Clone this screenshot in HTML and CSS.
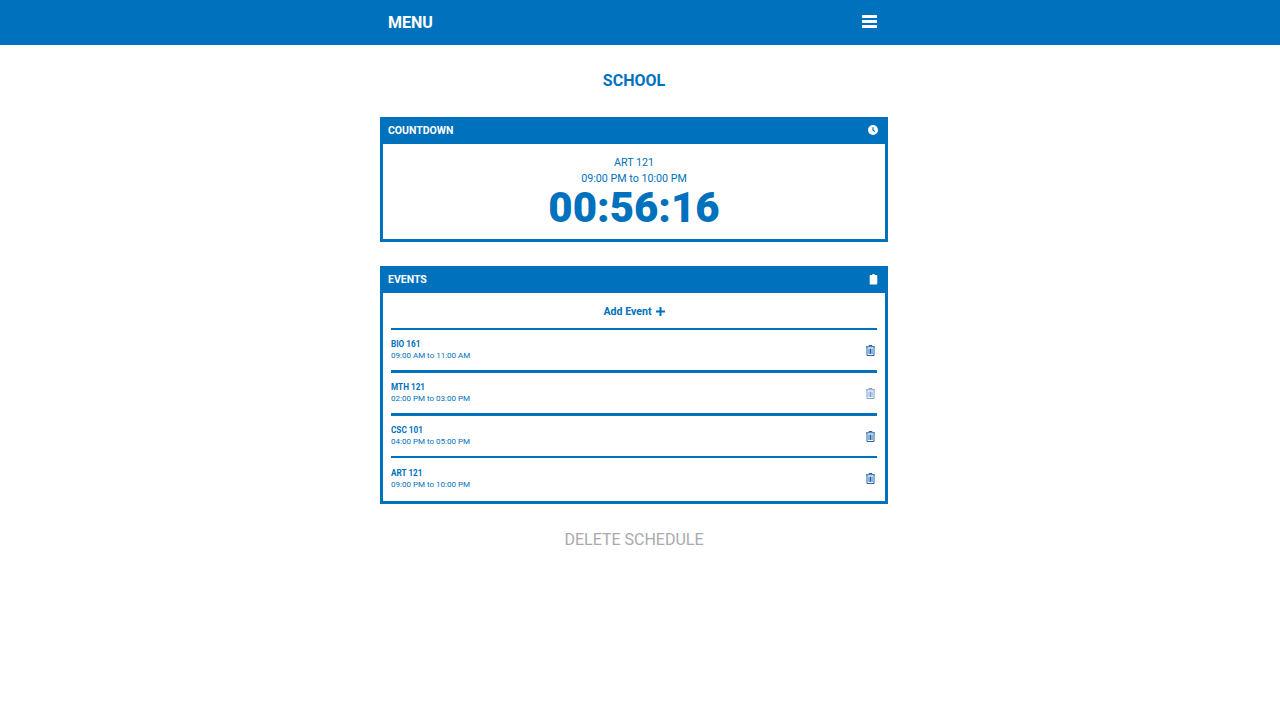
FILE: index.html
```html
<!DOCTYPE html>
<html lang="en">
<head>
  <meta charset="UTF-8">
  <title>School</title>
  <link rel="stylesheet" href="styles.css">
</head>
<body>
  <nav class="topbar">
    <div class="topbar-inner">
      <span class="topbar-title">MENU</span>
      <svg class="icon-bars" viewBox="0 0 15 13"><rect y="0" width="15" height="3" rx="0.5"/><rect y="5" width="15" height="3" rx="0.5"/><rect y="10" width="15" height="3" rx="0.5"/></svg>
    </div>
  </nav>

  <main class="page">
    <h1 class="page-title">SCHOOL</h1>

    <section class="card card-countdown">
      <header class="card-head">
        <span>COUNTDOWN</span>
        <svg class="icon-clock" viewBox="0 0 11 11"><circle cx="5.5" cy="5.5" r="5.5" fill="#fff"/><path d="M5.5 2.4v3.3l2.1 1.6" fill="none" stroke="#0071bc" stroke-width="1.3"/></svg>
      </header>
      <div class="countdown">
        <div class="countdown-name">ART 121</div>
        <div class="countdown-time">09:00 PM to 10:00 PM</div>
        <div class="countdown-clock">00:56:16</div>
      </div>
    </section>

    <section class="card card-events">
      <header class="card-head">
        <span>EVENTS</span>
        <svg class="icon-clipboard" viewBox="0 0 11 11"><path d="M2.500 1h1.500a1.500 1 0 0 1 3 0h1.500a.8.8 0 0 1 .8.8v8a.8.8 0 0 1-.8.8h-6a.8.8 0 0 1-.8-.8v-8a.8.8 0 0 1 .8-.8z" fill="#fff"/></svg>
      </header>
      <div class="events">
        <div class="add-event">Add Event
          <svg class="icon-plus" viewBox="0 0 9 9"><path d="M3.500 0h2v3.500H9v2H5.500V9h-2V5.500H0v-2h3.500z"/></svg>
        </div>
        <div class="event event-first">
          <div><div class="event-name">BIO 161</div><div class="event-time">09:00 AM to 11:00 AM</div></div>
          <svg class="icon-trash" viewBox="0 0 9 11"><path d="M3 1.500V.5h3v1M0 1.800h9M1 2v8.500h7V2M3 3.500v5.500M4.500 3.500v5.500M6 3.500v5.500" fill="none" stroke="#1f63a8" stroke-width="1"/></svg>
        </div>
        <div class="event">
          <div><div class="event-name">MTH 121</div><div class="event-time">02:00 PM to 03:00 PM</div></div>
          <svg class="icon-trash is-faded" viewBox="0 0 9 11"><path d="M3 1.500V.5h3v1M0 1.800h9M1 2v8.500h7V2M3 3.500v5.500M4.500 3.500v5.500M6 3.500v5.500" fill="none" stroke="#1f63a8" stroke-width="1"/></svg>
        </div>
        <div class="event">
          <div><div class="event-name">CSC 101</div><div class="event-time">04:00 PM to 05:00 PM</div></div>
          <svg class="icon-trash" viewBox="0 0 9 11"><path d="M3 1.500V.5h3v1M0 1.800h9M1 2v8.500h7V2M3 3.500v5.500M4.500 3.500v5.500M6 3.500v5.500" fill="none" stroke="#1f63a8" stroke-width="1"/></svg>
        </div>
        <div class="event event-thin">
          <div><div class="event-name">ART 121</div><div class="event-time">09:00 PM to 10:00 PM</div></div>
          <svg class="icon-trash" viewBox="0 0 9 11"><path d="M3 1.500V.5h3v1M0 1.800h9M1 2v8.500h7V2M3 3.500v5.500M4.500 3.500v5.500M6 3.500v5.500" fill="none" stroke="#1f63a8" stroke-width="1"/></svg>
        </div>
      </div>
    </section>

    <div class="delete-link">DELETE SCHEDULE</div>
  </main>
</body>
</html>
```

FILE: styles.css
```css
* {
  box-sizing: border-box;
}
body {
  margin: 0;
  padding-right: 12px;
  font-family: Roboto, "Liberation Sans", sans-serif;
  background-color: #fff;
  color: #0071bc;
}
.topbar {
  height: 45px;
  margin-right: -12px;
  padding-right: 12px;
  background-color: #0071bc;
}
.topbar-inner {
  width: 508px;
  height: 100%;
  margin: 0 auto;
  padding: 0 11px 0 8px;
  display: flex;
  align-items: center;
  justify-content: space-between;
  color: #fff;
}
.topbar-title {
  font-size: 16px;
  font-weight: 700;
}
.icon-bars {
  width: 15px;
  height: 13px;
  fill: #fff;
  margin-top: -3px;
}
.page {
  width: 508px;
  margin: 0 auto;
}
.page-title {
  margin: 0;
  padding-top: 27px;
  height: 72px;
  font-size: 16px;
  line-height: 18px;
  font-weight: 700;
  text-align: center;
}
.card {
  border: 3px solid #0071bc;
  border-top: 0;
}
.card-countdown {
  height: 125px;
  margin-bottom: 24px;
}
.card-events {
  height: 238px;
}
.card-head {
  height: 27px;
  margin: 0 -3px;
  padding: 0 10px 0 8px;
  display: flex;
  align-items: center;
  justify-content: space-between;
  background-color: #0071bc;
  color: #fff;
  font-size: 10.500px;
  font-weight: 700;
}
.icon-clock {
  width: 10px;
  height: 10px;
  margin-top: -1px;
}
.icon-clipboard {
  width: 11px;
  height: 11px;
  margin-right: -1px;
}
.countdown {
  padding-top: 11px;
  text-align: center;
}
.countdown-name,
.countdown-time {
  font-size: 10.700px;
  line-height: 16px;
}
.countdown-clock {
  font-size: 42px;
  line-height: 42px;
  font-weight: 900;
}
.events {
  padding: 0 8px;
}
.add-event {
  height: 35px;
  padding-top: 1px;
  display: flex;
  align-items: center;
  justify-content: center;
  gap: 4px;
  font-size: 10.600px;
  font-weight: 700;
}
.icon-plus {
  width: 9px;
  height: 9px;
  fill: #0071bc;
}
.event {
  height: 43px;
  border-top: 3px solid #0071bc;
  padding-right: 2px;
  display: flex;
  align-items: center;
  justify-content: space-between;
}
.event-first {
  height: 42px;
  border-top-width: 2px;
}
.event-thin {
  border-top-width: 2px;
}
.event-name {
  font-size: 8.200px;
  line-height: 12px;
  font-weight: 700;
}
.event-time {
  font-size: 8px;
  line-height: 12px;
}
.icon-trash {
  width: 9px;
  height: 11px;
}
.is-faded {
  opacity: 0.6;
}
.delete-link {
  margin-top: 25px;
  font-size: 16px;
  line-height: 21px;
  text-align: center;
  color: #a9a9ae;
}
```
